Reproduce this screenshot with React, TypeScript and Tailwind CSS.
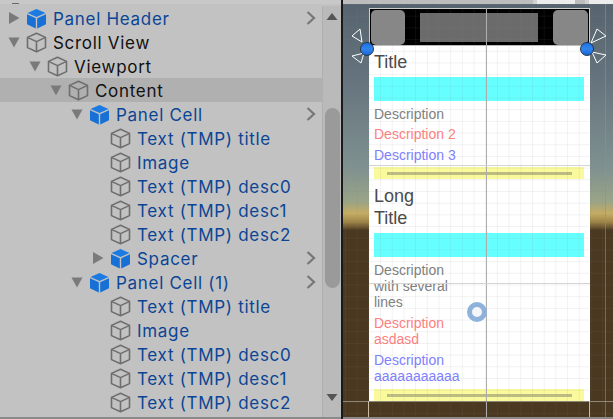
const font = { fontFamily: "Inter, sans-serif" };

type Row = {
  name: string;
  depth: number;
  arrow?: "right" | "down";
  prefab?: boolean;
  selected?: boolean;
  more?: boolean;
  plain?: boolean;
};

const rows: Row[] = [
  { name: "Panel Header", depth: 0, arrow: "right", prefab: true, more: true },
  { name: "Scroll View", depth: 0, arrow: "down", plain: true },
  { name: "Viewport", depth: 1, arrow: "down", plain: true },
  { name: "Content", depth: 2, arrow: "down", plain: true, selected: true },
  { name: "Panel Cell", depth: 3, arrow: "down", prefab: true, more: true },
  { name: "Text (TMP) title", depth: 4 },
  { name: "Image", depth: 4 },
  { name: "Text (TMP) desc0", depth: 4 },
  { name: "Text (TMP) desc1", depth: 4 },
  { name: "Text (TMP) desc2", depth: 4 },
  { name: "Spacer", depth: 4, arrow: "right", prefab: true, more: true },
  { name: "Panel Cell (1)", depth: 3, arrow: "down", prefab: true, more: true },
  { name: "Text (TMP) title", depth: 4 },
  { name: "Image", depth: 4 },
  { name: "Text (TMP) desc0", depth: 4 },
  { name: "Text (TMP) desc1", depth: 4 },
  { name: "Text (TMP) desc2", depth: 4 },
];

const indents = ["pl-[8px]", "pl-[29px]", "pl-[50px]", "pl-[71px]", "pl-[92px]"];

function Cube({ prefab }: { prefab?: boolean }) {
  if (prefab) {
    return (
      <svg width="21" height="21" viewBox="0 0 21 21" className="shrink-0">
        <path d="M10.5 1 L19.5 5 L10.5 9 L1.5 5 Z" fill="#1c7be0" />
        <path d="M1 6.3 L9.8 10.2 V20.5 L1 16.2 Z" fill="#1670d6" />
        <path d="M20 6.3 L11.2 10.2 V20.5 L20 16.2 Z" fill="#1670d6" />
      </svg>
    );
  }
  return (
    <svg width="21" height="21" viewBox="0 0 21 21" fill="none" stroke="#6e6e6e" strokeWidth="1.6" strokeLinejoin="round" className="shrink-0">
      <path d="M10.5 1.2 L19.5 5.4 V15.6 L10.5 19.8 L1.5 15.6 V5.4 Z" />
      <path d="M1.5 5.4 L10.5 9.6 L19.5 5.4 M10.5 9.6 V19.8" />
    </svg>
  );
}

function Arrow({ dir }: { dir?: "right" | "down" }) {
  if (!dir) return <span className="w-[12px] shrink-0" />;
  return (
    <svg width="12" height="12" viewBox="0 0 12 12" fill="#7a7a7a" className="shrink-0">
      {dir === "right" ? <path d="M1 0 L11.5 6 L1 12 Z" /> : <path d="M0.5 1.5 H11.5 L6 11.5 Z" />}
    </svg>
  );
}

function TreeRow({ row, indent }: { row: Row; indent: string }) {
  return (
    <div className={`flex h-[24px] items-center pr-[6px] ${indent} ${row.selected ? "bg-[#b0b0b0]" : ""}`}>
      <Arrow dir={row.arrow} />
      <span className="ml-[6px] mr-[6px] flex">
        <Cube prefab={row.prefab} />
      </span>
      <span
        className={`mt-[2px] flex-1 whitespace-nowrap text-[17px] leading-[24px] tracking-[0.7px] ${row.plain ? "text-[#111111]" : "text-[#0b4595]"}`}
      >
        {row.name}
      </span>
      {row.more && (
        <svg width="10" height="14" viewBox="0 0 10 14" fill="none" stroke="#777777" strokeWidth="2.2">
          <path d="M1.5 1 L8 7 L1.5 13" />
        </svg>
      )}
    </div>
  );
}

function Hierarchy() {
  return (
    <div className="relative flex h-[419px] w-[341px] shrink-0 flex-col overflow-hidden bg-[#c2c2c2]" style={font}>
      <div className="h-[6px] w-full shrink-0 bg-[linear-gradient(#c8c8c8_4px,#c2c2c2_4px)]" />
      <div className="absolute left-[12px] top-[3px] h-[1px] w-[7px] bg-[#6a6a6a]" />
      <div className="flex min-h-0 flex-1">
        <div className="w-[322px] shrink-0 overflow-hidden">
          {rows.map((row, i) => (
            <TreeRow key={i} row={row} indent={indents[row.depth]} />
          ))}
        </div>
        <div className="flex w-[19px] flex-col items-center border-l border-[#b0b0b0] bg-[#bababa]">
          <svg width="12" height="8" viewBox="0 0 12 8" fill="#555555" className="mt-[7px]">
            <path d="M6 0 L11.5 7 H0.5 Z" />
          </svg>
          <div className="mt-[87px] h-[180px] w-[15px] rounded-full bg-[#9a9a9a]" />
          <svg width="12" height="8" viewBox="0 0 12 8" fill="#555555" className="mt-[106px]">
            <path d="M0.5 0 H11.5 L6 7 Z" />
          </svg>
        </div>
      </div>
      <div className="h-[2px] w-full shrink-0 bg-[#8a8a8a]" />
    </div>
  );
}

function Spacer({ className }: { className: string }) {
  return (
    <div className={`ml-[5px] mr-[6px] flex shrink-0 items-center justify-center bg-[#fafa9c] ${className}`}>
      <div className="h-[3px] w-[185px] bg-[#bcbc82]" />
    </div>
  );
}

function Desc({ lines, color, className }: { lines: string[]; color: string; className: string }) {
  return (
    <div className={`px-[5px] text-[14px] leading-[16px] ${color} ${className}`}>
      {lines.map((l) => (
        <div key={l}>{l}</div>
      ))}
    </div>
  );
}

function Handle({ className, ball, d }: { className: string; ball: string; d: string }) {
  return (
    <div className={`absolute h-[38px] w-[24px] ${className}`}>
      <svg width="24" height="38" viewBox="0 0 24 38" fill="none" stroke="#ffffff" strokeWidth="1" className="overflow-visible">
        <path d={d} />
      </svg>
      <div className={`absolute top-[15px] h-[14px] w-[14px] rounded-full border border-[#23364f] bg-[linear-gradient(#1f6fe0,#2f86ee_50%,#1b64d2)] ${ball}`} />
    </div>
  );
}

function Canvas() {
  return (
    <div className="flex h-[393px] w-[221px] flex-col" style={{ fontFamily: '"Liberation Sans", Arial, sans-serif' }}>
      <div className="flex h-[38px] shrink-0 items-center justify-between border border-[#cfcfcf] border-b-[#bdbdbd] bg-black px-[1px]">
        <div className="h-[35px] w-[34px] rounded-[5px] bg-[#878787]" />
        <div className="h-[29px] w-[118px] bg-[#6b6b6b]" />
        <div className="h-[35px] w-[35px] rounded-[5px] bg-[#878787]" />
      </div>
      <div className="flex flex-1 flex-col bg-white">
        <div className="mt-[5px] px-[5px] text-[18px] leading-[22px] text-[#4a4a4a]">Title</div>
        <div className="ml-[5px] mr-[6px] mt-[4px] h-[24px] shrink-0 bg-[#66ffff]" />
        <Desc lines={["Description"]} color="text-[#808080]" className="mt-[5px]" />
        <Desc lines={["Description 2"]} color="text-[#ff7f7f]" className="mt-[4px]" />
        <Desc lines={["Description 3"]} color="text-[#8080ff]" className="mt-[5px]" />
        <Spacer className="mt-[4px] h-[12px]" />
        <div className="mt-[6px] px-[5px] text-[18px] leading-[22px] text-[#4a4a4a]">
          Long
          <br />
          Title
        </div>
        <div className="ml-[5px] mr-[6px] mt-[4px] h-[24px] shrink-0 bg-[#66ffff]" />
        <Desc lines={["Description", "with several", "lines"]} color="text-[#808080]" className="mt-[5px]" />
        <Desc lines={["Description", "asdasd"]} color="text-[#ff7f7f]" className="mt-[5px]" />
        <Desc lines={["Description", "aaaaaaaaaaa"]} color="text-[#8080ff]" className="mt-[5px]" />
        <Spacer className="mt-[5px] h-[12px]" />
      </div>
    </div>
  );
}

function Scene() {
  return (
    <div className="relative h-[419px] flex-1 overflow-hidden border-l-2 border-[#1a1a1a] bg-[linear-gradient(#56636e_0%,#63727c_18%,#7f9190_40%,#99a487_48%,#c6ac62_51%,#9c8348_53%,#4a3820_55%,#4a3820_100%)] pt-[8px] pl-[26px]">
      <Canvas />
      {/* editor grid and gizmos sit on top of the canvas */}
      <div className="pointer-events-none absolute inset-0 bg-[linear-gradient(to_right,rgba(128,128,128,0.1)_1px,transparent_1px),linear-gradient(to_bottom,rgba(128,128,128,0.1)_1px,transparent_1px)] bg-[length:11.7px_11.7px] bg-[position:2px_4px]" />
      <div className="pointer-events-none absolute bottom-0 left-[143px] top-[8px] w-[1px] bg-[#adadad]" />
      <div className="pointer-events-none absolute left-[26px] top-[165px] h-[1px] w-[221px] bg-[#d4d4d4]" />
      <div className="pointer-events-none absolute left-[26px] top-[283px] h-[1px] w-[221px] bg-[#d4d4d4]" />
      <div className="pointer-events-none absolute left-0 right-0 top-[401px] h-[1px] bg-[#8d8676]" />
      <div className="pointer-events-none absolute bottom-0 left-[25px] top-[401px] w-[1px] bg-[#c9bca0]" />
      <div className="pointer-events-none absolute bottom-0 left-[246px] top-[401px] w-[1px] bg-[#c9bca0]" />
      <div className="pointer-events-none absolute bottom-0 left-[262px] top-0 w-[1px] bg-[#8f8f8f]/60" />
      <Handle className="left-[7px] top-[27px]" ball="left-[10px]" d="M10 2 L2 9 L12 15 Z M2 29 L11 36 L14 26 Z" />
      <Handle className="left-[240px] top-[27px]" ball="left-[-3px]" d="M14 2 L23 9 L8 16 Z M23 28 L14 36 L9 25 Z" />
      <div className="absolute left-[124px] top-[302px] h-[20px] w-[20px] rounded-full border-[5px] border-[#8fb2dc] bg-[#f4f6f8] blur-[0.5px]" />
      <div className="absolute left-0 right-0 top-0 flex h-[4px] bg-[#bdbdbd]">
        <div className="ml-[190px] h-full w-[4px] bg-[#d0d0d0]" />
        <div className="h-full w-[38px] bg-[#ececec]" />
        <div className="ml-[10px] h-full w-[4px] bg-[#d0d0d0]" />
        <div className="flex-1 bg-[#ececec]" />
      </div>
      <div className="absolute bottom-0 left-0 right-0 h-[2px] bg-[#8a8a8a]" />
    </div>
  );
}

export default function App() {
  return (
    <div className="flex h-[419px] w-[613px] overflow-hidden bg-[#c2c2c2]">
      <Hierarchy />
      <Scene />
    </div>
  );
}
